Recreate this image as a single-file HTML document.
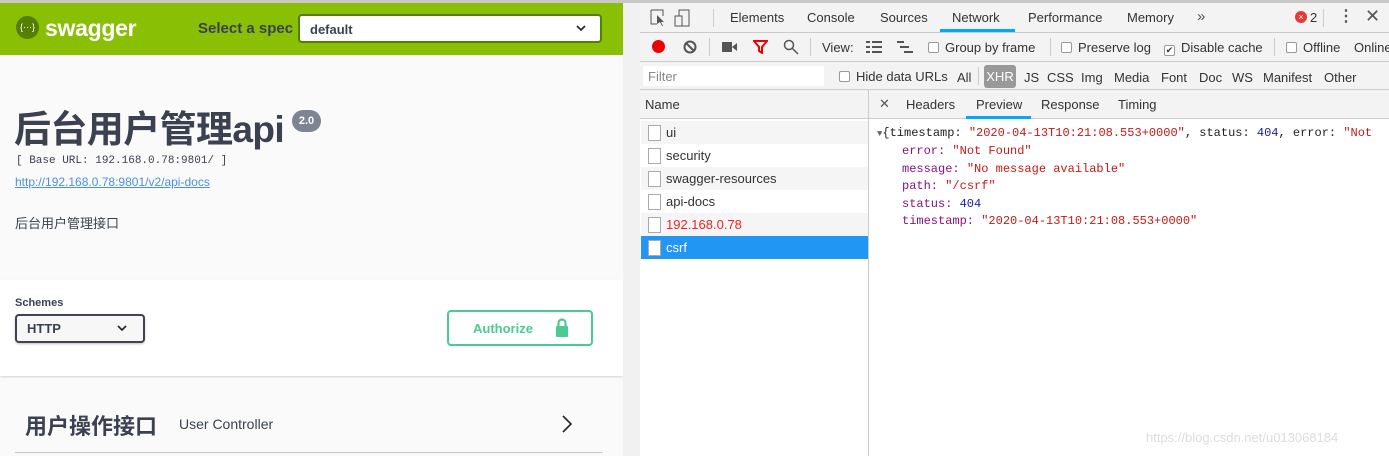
<!DOCTYPE html>
<html><head><meta charset="utf-8"><style>
*{box-sizing:border-box;margin:0;padding:0}
body{width:1389px;height:456px;overflow:hidden;background:#fff;font-family:"Liberation Sans","Noto Sans CJK SC",sans-serif;position:relative}
.abs{position:absolute}
.dt{font-size:13px;color:#333;white-space:nowrap}
.cb{display:inline-block;width:11px;height:11px;border:1px solid #999;border-radius:2px;background:#fff;vertical-align:-1px;margin-right:6px}
.mono{font-family:"Liberation Mono",monospace;font-size:12px;white-space:pre}
.row{position:absolute;left:641px;width:227px;height:23px;font-size:13px;color:#333;padding-left:25px;line-height:23px}
.row i{position:absolute;left:7px;top:4px;width:13px;height:16px;border:1px solid #aaa;background:#fff}
</style></head><body>
<div class="abs" style="left:0;top:0;width:1389px;height:3px;background:#c8c8c8"></div>
<div class="abs" style="left:0;top:3px;width:623px;height:453px;background:#fafafa"></div>
<div class="abs" style="left:0;top:3px;width:623px;height:52px;background:#89bf04"></div>
<div class="abs" style="left:16px;top:16px;width:23px;height:23px;border-radius:50%;background:#547f00;color:#fff;font-size:9px;text-align:center;line-height:23px">{···}</div>
<div class="abs" style="left:45px;top:15px;color:#fff;font-weight:bold;font-size:23px;line-height:26px;letter-spacing:-0.3px">swagger</div>
<div class="abs" style="left:198px;top:20px;color:#3b4151;font-weight:bold;font-size:15px">Select a spec</div>
<div class="abs" style="left:298px;top:14px;width:304px;height:29px;border:2px solid #547f00;border-radius:4px;background:#fff;font-weight:bold;font-size:13px;color:#3b4151;padding:6px 10px">default<svg style="position:absolute;right:14px;top:9px" width="10" height="7"><path d="M1 1l4 4 4-4" fill="none" stroke="#222" stroke-width="1.6"/></svg></div>
<div class="abs" style="left:14px;top:109px;font-size:37px;line-height:42px;font-weight:bold;color:#3b4151;letter-spacing:-0.6px">后台用户管理api</div>
<div class="abs" style="left:292px;top:110px;width:29px;height:22px;border-radius:11px;background:#7d8492;color:#fff;font-size:11px;font-weight:bold;text-align:center;line-height:22px">2.0</div>
<div class="abs mono" style="left:16px;top:155px;font-size:11px;color:#3b4151">[ Base URL: 192.168.0.78:9801/ ]</div>
<div class="abs" style="left:15px;top:175px;font-size:12px;color:#4990e2;text-decoration:underline">http://192.168.0.78:9801/v2/api-docs</div>
<div class="abs" style="left:15px;top:213px;font-size:13px;color:#3b4151">后台用户管理接口</div>
<div class="abs" style="left:0;top:280px;width:623px;height:96px;background:#fff;box-shadow:0 1px 2px rgba(0,0,0,.15)"></div>
<div class="abs" style="left:15px;top:297px;font-size:11px;font-weight:bold;color:#3b4151">Schemes</div>
<div class="abs" style="left:15px;top:314px;width:130px;height:29px;border:2px solid #41444e;border-radius:4px;background:#f7f7f7;box-shadow:0 1px 2px rgba(0,0,0,.25);font-weight:bold;font-size:13px;color:#3b4151;padding:5px 10px">HTTP<svg style="position:absolute;right:16px;top:9px" width="10" height="7"><path d="M1 1l4 4 4-4" fill="none" stroke="#222" stroke-width="1.6"/></svg></div>
<div class="abs" style="left:447px;top:310px;width:146px;height:36px;border:2px solid #49cc90;border-radius:4px;color:#49cc90;font-weight:bold;font-size:13px;padding:9px 0 0 24px">Authorize
<svg class="abs" style="left:106px;top:6px" width="14" height="19" viewBox="0 0 14 19"><path d="M3.5 9V5a3.5 3.5 0 0 1 7 0v4" fill="none" stroke="#49cc90" stroke-width="2.2"/><rect x="1" y="8" width="12" height="11" rx="1" fill="#49cc90"/></svg></div>
<div class="abs" style="left:25px;top:409px;font-size:22px;font-weight:bold;color:#3b4151">用户操作接口</div>
<div class="abs" style="left:179px;top:416px;font-size:14px;color:#3b4151">User Controller</div>
<svg class="abs" style="left:561px;top:414px" width="12" height="20"><path d="M2 2l8 8-8 8" fill="none" stroke="#222" stroke-width="1.6"/></svg>
<div class="abs" style="left:15px;top:452px;width:588px;height:1px;background:#c8c8c8"></div>
<div class="abs" style="left:623px;top:3px;width:17px;height:453px;background:#f1f1f1"></div>
<div class="abs" style="left:640px;top:3px;width:749px;height:87px;background:#f3f3f3"></div>
<div class="abs" style="left:640px;top:32px;width:749px;height:1px;background:#ccc"></div>
<div class="abs" style="left:640px;top:61px;width:749px;height:1px;background:#ccc"></div>
<div class="abs" style="left:640px;top:89px;width:749px;height:1px;background:#ccc"></div>
<div class="abs" style="left:640px;top:90px;width:749px;height:29px;background:#f3f3f3;border-bottom:1px solid #ccc"></div>
<div class="abs" style="left:868px;top:90px;width:1px;height:366px;background:#ccc"></div>
<svg class="abs" style="left:650px;top:9px" width="40" height="18"><path d="M1 1h12v6M1 1v14h6" fill="none" stroke="#555"/><path d="M7 6l7 7-3 0 2 4-1 0-2-4-3 2z" fill="#555"/><rect x="29" y="1" width="10" height="16" fill="none" stroke="#555"/><rect x="25" y="7" width="7" height="10" fill="#f3f3f3" stroke="#555"/></svg>
<div class="abs" style="left:713px;top:9px;width:1px;height:18px;background:#ccc"></div>
<div class="abs dt" style="left:730px;top:10px">Elements</div>
<div class="abs dt" style="left:807px;top:10px">Console</div>
<div class="abs dt" style="left:880px;top:10px">Sources</div>
<div class="abs dt" style="left:952px;top:10px">Network</div>
<div class="abs" style="left:940px;top:29px;width:75px;height:3px;background:#03a9f4"></div>
<div class="abs dt" style="left:1028px;top:10px">Performance</div>
<div class="abs dt" style="left:1127px;top:10px">Memory</div>
<div class="abs dt" style="left:1197px;top:8px;font-size:15px;color:#555">»</div>
<div class="abs" style="left:1295px;top:11px;width:12px;height:12px;border-radius:50%;background:#e53935;color:#fff;font-size:9px;text-align:center;line-height:12px">×</div>
<div class="abs dt" style="left:1310px;top:10px">2</div>
<div class="abs" style="left:1323px;top:9px;width:1px;height:18px;background:#ccc"></div>
<div class="abs dt" style="left:1338px;top:6px;font-size:16px;color:#555;font-weight:bold">⋮</div>
<div class="abs dt" style="left:1365px;top:6px;font-size:18px;color:#555">✕</div>
<div class="abs" style="left:652px;top:40px;width:13px;height:13px;border-radius:50%;background:#e00"></div>
<svg class="abs" style="left:683px;top:40px" width="14" height="14"><circle cx="7" cy="7" r="5.5" fill="none" stroke="#555" stroke-width="2"/><path d="M3 3l8 8" stroke="#555" stroke-width="2"/></svg>
<div class="abs" style="left:709px;top:38px;width:1px;height:18px;background:#ccc"></div>
<svg class="abs" style="left:722px;top:41px" width="16" height="12"><rect x="0" y="1" width="10" height="10" fill="#555"/><path d="M10 6l5-4v8z" fill="#555"/></svg>
<svg class="abs" style="left:753px;top:40px" width="15" height="14"><path d="M1 1h13l-5 6v6l-3-2V7z" fill="none" stroke="#e00" stroke-width="2"/></svg>
<svg class="abs" style="left:783px;top:39px" width="16" height="16"><circle cx="6" cy="6" r="4.5" fill="none" stroke="#555" stroke-width="1.5"/><path d="M9 9l6 6" stroke="#555" stroke-width="1.5"/></svg>
<div class="abs" style="left:810px;top:38px;width:1px;height:18px;background:#ccc"></div>
<div class="abs dt" style="left:822px;top:40px">View:</div>
<svg class="abs" style="left:866px;top:41px" width="16" height="12"><path d="M0 1h4M6 1h10M0 6h4M6 6h10M0 11h4M6 11h10" stroke="#555" stroke-width="2"/></svg>
<svg class="abs" style="left:897px;top:41px" width="16" height="12"><path d="M0 1h7M3 6h9M7 11h9" stroke="#555" stroke-width="2"/></svg>
<div class="abs dt" style="left:928px;top:40px"><span class="cb"></span>Group by frame</div>
<div class="abs" style="left:1050px;top:38px;width:1px;height:18px;background:#ccc"></div>
<div class="abs dt" style="left:1061px;top:40px"><span class="cb"></span>Preserve log</div>
<div class="abs dt" style="left:1164px;top:40px"><span class="cb" style="text-align:center;font-size:9px;line-height:9px">✔</span>Disable cache</div>
<div class="abs" style="left:1274px;top:38px;width:1px;height:18px;background:#ccc"></div>
<div class="abs dt" style="left:1286px;top:40px"><span class="cb"></span>Offline</div>
<div class="abs dt" style="left:1354px;top:40px">Online</div>
<div class="abs" style="left:643px;top:66px;width:181px;height:20px;background:#fff;font-size:13px;color:#888;padding:3px 5px">Filter</div>
<div class="abs dt" style="left:839px;top:69px"><span class="cb"></span>Hide data URLs</div>
<div class="abs dt" style="left:957px;top:70px">All</div>
<div class="abs" style="left:978px;top:67px;width:1px;height:18px;background:#ccc"></div>
<div class="abs" style="left:984px;top:65px;width:32px;height:23px;border-radius:3px;background:#999;color:#fff;font-size:13px;text-align:center;line-height:23px">XHR</div>
<div class="abs dt" style="left:1024px;top:70px">JS</div>
<div class="abs dt" style="left:1047px;top:70px">CSS</div>
<div class="abs dt" style="left:1081px;top:70px">Img</div>
<div class="abs dt" style="left:1114px;top:70px">Media</div>
<div class="abs dt" style="left:1161px;top:70px">Font</div>
<div class="abs dt" style="left:1199px;top:70px">Doc</div>
<div class="abs dt" style="left:1232px;top:70px">WS</div>
<div class="abs dt" style="left:1263px;top:70px">Manifest</div>
<div class="abs dt" style="left:1324px;top:70px">Other</div>
<div class="abs dt" style="left:645px;top:97px">Name</div>
<div class="abs dt" style="left:879px;top:96px;color:#555">✕</div>
<div class="abs dt" style="left:906px;top:97px">Headers</div>
<div class="abs dt" style="left:976px;top:97px">Preview</div>
<div class="abs" style="left:966px;top:116px;width:65px;height:3px;background:#03a9f4"></div>
<div class="abs dt" style="left:1041px;top:97px">Response</div>
<div class="abs dt" style="left:1118px;top:97px">Timing</div>
<div class="row" style="top:121px;background:#f5f5f5"><i></i>ui</div>
<div class="row" style="top:144px"><i></i>security</div>
<div class="row" style="top:167px;background:#f5f5f5"><i></i>swagger-resources</div>
<div class="row" style="top:190px"><i></i>api-docs</div>
<div class="row" style="top:213px;background:#f5f5f5;color:#e22"><i></i>192.168.0.78</div>
<div class="row" style="top:236px;background:#2196f3;color:#fff"><i></i>csrf</div>
<div class="abs mono" style="left:877px;top:126px;color:#222"><span style="font-size:9px;color:#666">▼</span>{timestamp: <span style="color:#c41a16">"2020-04-13T10:21:08.553+0000"</span>, status: <span style="color:#1a1aa6">404</span>, error: <span style="color:#c41a16">"Not</span></div>
<div class="abs mono" style="left:902px;top:143px;color:#881280;line-height:17.5px">error: <span style="color:#c41a16">"Not Found"</span>
message: <span style="color:#c41a16">"No message available"</span>
path: <span style="color:#c41a16">"/csrf"</span>
status: <span style="color:#1a1aa6">404</span>
timestamp: <span style="color:#c41a16">"2020-04-13T10:21:08.553+0000"</span></div>
<div class="abs" style="left:1146px;top:430px;font-size:13px;color:#ddd">https://blog.csdn.net/u013068184</div>
</body></html>
